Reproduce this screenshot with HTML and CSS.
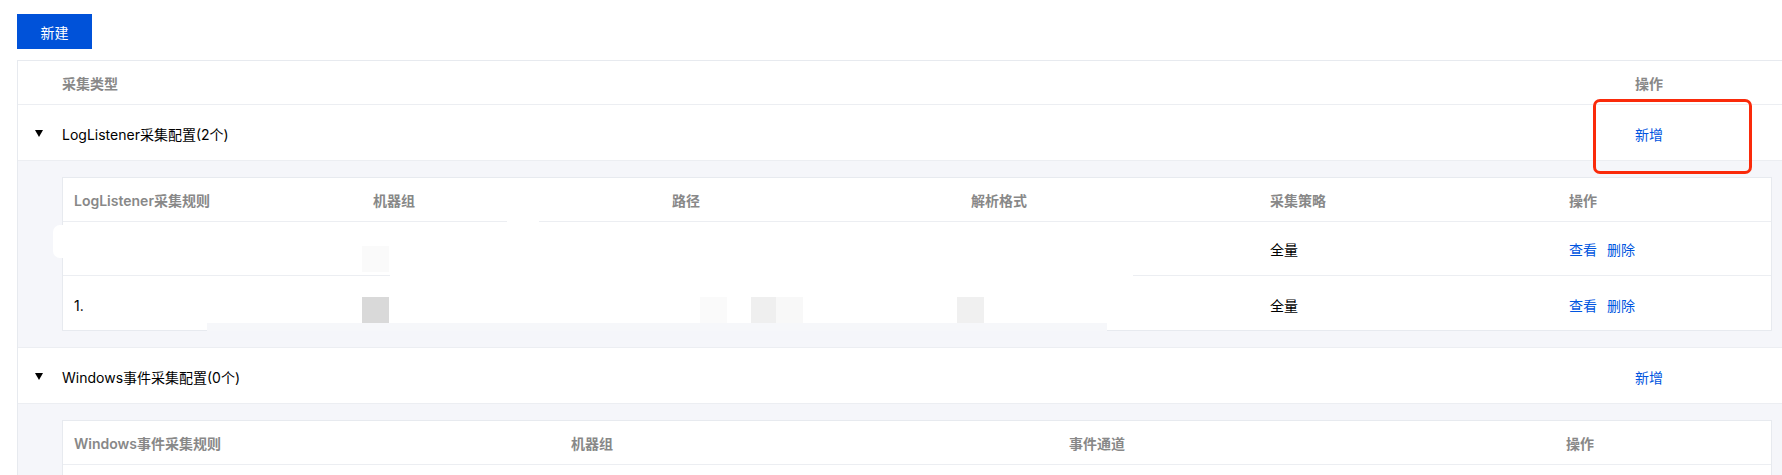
FILE: index.html
```html
<!DOCTYPE html>
<html lang="zh-CN">
<head>
<meta charset="utf-8">
<title>采集配置</title>
<link rel="stylesheet" href="styles.css">
</head>
<body>
<div class="page">
  <button class="btn-primary">新建</button>

  <div class="outer">
    <div class="outer-head">
      <div class="cell-first">采集类型</div>
      <div>操作</div>
    </div>

    <div class="group-row">
      <div class="cell-toggle"><span class="caret"></span><span>LogListener采集配置(2个)</span></div>
      <div><a class="link">新增</a></div>
    </div>
    <div class="expand">
      <div class="inner inner-six">
        <div class="inner-row inner-head">
          <div class="c">LogListener采集规则</div>
          <div class="c">机器组</div>
          <div class="c">路径</div>
          <div class="c">解析格式</div>
          <div class="c">采集策略</div>
          <div class="c">操作</div>
        </div>
        <div class="inner-row data-row">
          <div class="c"></div>
          <div class="c"></div>
          <div class="c"></div>
          <div class="c"></div>
          <div class="c">全量</div>
          <div class="c"><a class="link gap">查看</a><a class="link">删除</a></div>
        </div>
        <div class="inner-row data-row last">
          <div class="c">1.</div>
          <div class="c"></div>
          <div class="c"></div>
          <div class="c"></div>
          <div class="c">全量</div>
          <div class="c"><a class="link gap">查看</a><a class="link">删除</a></div>
        </div>
      </div>
    </div>

    <div class="group-row">
      <div class="cell-toggle"><span class="caret"></span><span>Windows事件采集配置(0个)</span></div>
      <div><a class="link">新增</a></div>
    </div>
    <div class="expand expand-last">
      <div class="inner inner-four">
        <div class="inner-row inner-head">
          <div class="c">Windows事件采集规则</div>
          <div class="c">机器组</div>
          <div class="c">事件通道</div>
          <div class="c">操作</div>
        </div>
        <div class="empty-row"></div>
      </div>
    </div>
  </div>
</div>

<!-- redaction remnants over the table -->
<div class="smudge sq sq-faint" style="left:362px;top:246px"></div>
<div class="smudge sq" style="left:362px;top:297px;background:#d9d9d9"></div>
<div class="smudge sq" style="left:700px;top:297px;background:#fafafa"></div>
<div class="smudge sq" style="left:751px;top:297px;background:#efefef"></div>
<div class="smudge sq" style="left:776px;top:297px;background:#f8f8f8"></div>
<div class="smudge sq" style="left:957px;top:297px;background:#f0f0f0"></div>
<div class="smudge" style="left:390px;top:273px;width:743px;height:3px;background:#fff"></div>
<div class="smudge" style="left:507px;top:219px;width:32px;height:3px;background:#fff"></div>
<div class="smudge blob" style="left:53px;top:225px;width:30px;height:33px"></div>
<div class="smudge" style="left:207px;top:323px;width:900px;height:8px;background:#f6f7fa"></div>

<!-- annotation -->
<div class="annot"></div>
</body>
</html>
```

FILE: styles.css
```css
html, body {
  margin: 0;
  padding: 0;
  background: #fff;
  overflow: hidden;
}
body {
  position: relative;
  width: 1782px;
  height: 475px;
  font-family: Inter, "Noto Sans CJK SC", sans-serif;
  font-size: 14px;
  color: #000;
}
.page {
  padding: 14px 0 0 17px;
}
.btn-primary {
  display: flex;
  align-items: center;
  justify-content: center;
  width: 75px;
  height: 35px;
  padding: 0;
  border: none;
  background: #0052d9;
  color: #fff;
  font-family: inherit;
  font-size: 14px;
}
.outer {
  margin-top: 11px;
  width: 1765px;
  border: 1px solid #e7eaef;
  border-right: none;
  border-bottom: none;
  box-sizing: border-box;
}
.outer-head,
.group-row {
  display: grid;
  grid-template-columns: 1617px 1fr;
  align-items: center;
  border-bottom: 1px solid #eceef2;
}
.outer-head {
  height: 43px;
  color: #888;
  font-weight: 600;
}
.cell-first {
  padding-left: 44px;
}
.group-row {
  padding-top: 2px;
  box-sizing: border-box;
  height: 56px;
}
.cell-toggle {
  display: flex;
  align-items: center;
  padding-left: 17px;
}
.caret {
  width: 0;
  height: 0;
  border-left: 4px solid transparent;
  border-right: 4px solid transparent;
  border-top: 7px solid #000;
  margin-right: 19px;
}
.link {
  color: #0055e0;
  text-decoration: none;
}
.link.gap {
  margin-right: 10px;
}
.expand {
  background: #f5f6fa;
  padding: 16px 10px 16px 44px;
  border-bottom: 1px solid #eceef2;
}
.expand-last {
  padding-bottom: 0;
  border-bottom: none;
}
.inner {
  background: #fff;
  border: 1px solid #e7eaef;
}
.expand-last .inner {
  border-bottom: none;
}
.inner-row {
  display: grid;
  align-items: center;
}
.inner-six .inner-row {
  grid-template-columns: 299px 299px 299px 299px 299px 1fr;
}
.inner-four .inner-row {
  grid-template-columns: 497px 498px 497px 1fr;
}
.inner-head {
  height: 43px;
  color: #888;
  font-weight: 600;
  border-bottom: 1px solid #eceef2;
}
.data-row {
  height: 53px;
  border-bottom: 1px solid #eceef2;
}
.data-row.last {
  height: 54px;
  border-bottom: none;
  padding-top: 4px;
  box-sizing: border-box;
}
.empty-row {
  height: 11px;
}
.c {
  padding-left: 11px;
}
.smudge {
  position: absolute;
}
.sq {
  width: 27px;
  height: 26px;
}
.sq-faint {
  background: #fafafa;
}
.blob {
  background: #fff;
  border-radius: 7px 0 0 7px;
}
.annot {
  position: absolute;
  left: 1593px;
  top: 99px;
  width: 159px;
  height: 75px;
  box-sizing: border-box;
  border: 3px solid #fa2a0a;
  border-radius: 7px;
}
```
